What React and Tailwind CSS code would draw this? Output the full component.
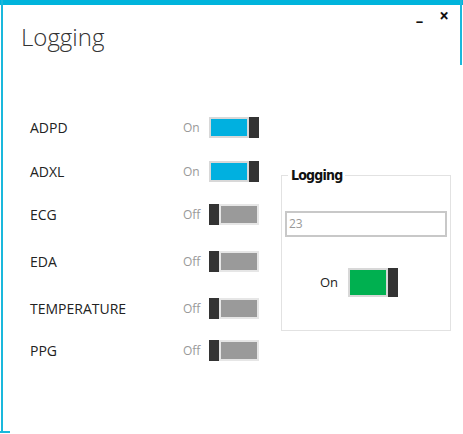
import React from 'react';

const CHANNELS = [
  { name: 'ADPD', on: true, mt: 'mt-0' },
  { name: 'ADXL', on: true, mt: 'mt-[23px]' },
  { name: 'ECG', on: false, mt: 'mt-[22px]' },
  { name: 'EDA', on: false, mt: 'mt-[26px]' },
  { name: 'TEMPERATURE', on: false, mt: 'mt-[26px]' },
  { name: 'PPG', on: false, mt: 'mt-[21px]' },
];

function Toggle({ on, color = 'bg-[#00b0e0]', tall = false }) {
  const h = tall ? 'h-[29px]' : 'h-[21px]';
  return (
    <div className={`flex w-[50px] ${h}`}>
      {!on && <div className="w-[10px] h-full bg-[#333333]" />}
      <div className={`flex-1 h-full border-2 ${on ? 'border-[#d8d8d8]' : 'border-[#e6e6e6]'} ${on ? color : 'bg-[#9a9a9a]'}`} />
      {on && <div className="w-[10px] h-full bg-[#333333]" />}
    </div>
  );
}

export default function App() {
  return (
    <div className="relative w-[463px] h-[434px] bg-white overflow-hidden" style={{ fontFamily: '"Open Sans", "Noto Sans", sans-serif' }}>
      {/* window edges */}
      <div className="absolute top-0 left-0 w-full h-[5px] bg-[#00b4dc]" />
      <div className="absolute top-0 left-[1px] w-[2px] h-[433px] bg-[#1ab8dc]" />
      <div className="absolute top-[431px] left-0 w-[10px] h-[2px] bg-[#1ab8dc]" />
      <div className="absolute top-0 left-[460px] w-[2px] h-[65px] bg-[#1ab8dc]" />

      <div className="flex justify-between pt-[5px]">
        <div className="pl-[21px] pt-[16px] text-[24px] font-light leading-[32px] text-[#333]">Logging</div>
        <div className="flex items-start gap-[16px] pr-[14px] pt-[1px] text-[#111]">
          <span className="text-[15px] font-bold leading-[20px] mt-[4px]">–</span>
          <span className="text-[17px] font-bold leading-[20px]">×</span>
        </div>
      </div>

      <div className="flex pt-[64px]">
        <div className="flex flex-col pl-[30px] w-[262px]">
          {CHANNELS.map((c) => (
            <div key={c.name} className={`flex items-center h-[21px] ${c.mt}`}>
              <span className="w-[153px] text-[14px] text-[#222]">{c.name}</span>
              <span className="w-[26px] text-[12px] text-[#999]">{c.on ? 'On' : 'Off'}</span>
              <Toggle on={c.on} />
            </div>
          ))}
        </div>

        <div className="relative mt-[58px] ml-[19px] w-[170px] h-[156px] border border-[#e2e2e2]">
          <div
            className="absolute -top-[11px] left-[6px] px-[3px] bg-white text-[14px] font-bold text-[#111] leading-[20px] tracking-[-0.8px]"
            style={{ fontFamily: '"Liberation Sans Narrow", "DejaVu Sans Condensed", sans-serif' }}
          >
            Logging
          </div>
          <div className="mt-[35px] mx-[3px] h-[26px] border-2 border-[#c8c8c8] flex items-center px-[2px] text-[12px] text-[#999]">
            23
          </div>
          <div className="flex items-center mt-[31px] pl-[38px]">
            <span className="w-[28px] text-[13px] text-[#222]">On</span>
            <Toggle on tall color="bg-[#00b050]" />
          </div>
        </div>
      </div>
    </div>
  );
}
